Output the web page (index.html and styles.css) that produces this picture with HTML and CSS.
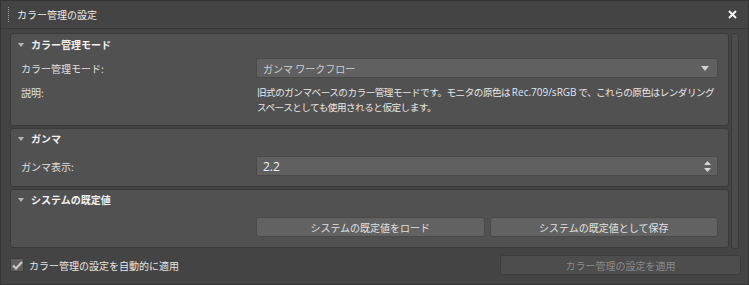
FILE: index.html
```html
<!DOCTYPE html>
<html lang="ja">
<head>
<meta charset="UTF-8">
<title>カラー管理の設定</title>
<link rel="stylesheet" href="styles.css">
</head>
<body>

<div class="window">
    <div class="titlebar">
        <span class="grip"></span>
        <span class="title">カラー管理の設定</span>
        <svg class="close" width="9" height="9" viewBox="0 0 9 9">
            <path d="M1 1 L8 8 M8 1 L1 8" stroke="#f2f2f2" stroke-width="2"/>
        </svg>
    </div>

    <div class="content">
        <div class="panels">
            <div class="panel">
                <div class="panel-head first"><span class="arrow"></span>カラー管理モード</div>
                <div class="panel-body first">
                    <div class="row">
                        <label>カラー管理モード:</label>
                        <div class="field dropdown">ガンマ ワークフロー<span class="down"></span></div>
                    </div>
                    <div class="row desc">
                        <label>説明:</label>
                        <p>旧式のガンマベースのカラー管理モードです。モニタの原色は <span class="latin">Rec.709/sRGB</span> で、これらの原色はレンダリング<br>スペースとしても使用されると仮定します。</p>
                    </div>
                </div>
            </div>

            <div class="panel">
                <div class="panel-head"><span class="arrow"></span>ガンマ</div>
                <div class="panel-body">
                    <div class="row">
                        <label>ガンマ表示:</label>
                        <div class="field spinner">2.2
                            <svg width="7" height="11" viewBox="0 0 7 11">
                                <path d="M3.5 0 L7 4 L0 4 Z M0 7 L7 7 L3.5 11 Z" fill="#d8d8d8"/>
                            </svg>
                        </div>
                    </div>
                </div>
            </div>

            <div class="panel">
                <div class="panel-head"><span class="arrow"></span>システムの既定値</div>
                <div class="panel-body">
                    <div class="row">
                        <span></span>
                        <div class="buttons">
                            <button class="btn">システムの既定値をロード</button>
                            <button class="btn">システムの既定値として保存</button>
                        </div>
                    </div>
                </div>
            </div>
        </div>
        <div class="scrollbar"></div>
    </div>

    <div class="footer">
        <label class="check">
            <span class="box">
                <svg width="11" height="9" viewBox="0 0 11 9">
                    <path d="M1 4.5 L4 7.5 L10 1" stroke="#c8c8c8" stroke-width="2.2" fill="none"/>
                </svg>
            </span>
            カラー管理の設定を自動的に適用
        </label>
        <button class="btn apply" disabled>カラー管理の設定を適用</button>
    </div>
</div>

</body>
</html>
```

FILE: styles.css
```css
body {
    margin: 0;
    background-color: #444444;
    font-family: "Noto Sans CJK JP", "Liberation Sans", sans-serif;
    font-size: 10px;
    color: #e2e2e2;
}
.window {
    width: 749px;
    height: 285px;
    box-sizing: border-box;
    border: 1px solid #333333;
    background-color: #444444;
}
.titlebar {
    height: 27px;
    display: flex;
    align-items: center;
    border-bottom: 1px solid #383838;
}
.grip {
    width: 0;
    height: 15px;
    margin-left: 7px;
    border-left: 1px dotted #9a9a9a;
}
.title {
    margin-left: 8px;
    font-size: 10px;
    color: #ececec;
    flex: 1;
}
.close {
    margin-right: 11px;
}
.content {
    display: flex;
    gap: 2px;
    padding: 4px 7px 0 9px;
}
.panels {
    width: 719px;
    display: flex;
    flex-direction: column;
    gap: 2px;
}
.panel {
    background-color: #515151;
    border: 1px solid #3a3a3a;
    border-radius: 3px;
}
.panel-head {
    height: 19px;
    display: flex;
    align-items: center;
    padding-left: 7px;
    font-weight: bold;
    color: #f2f2f2;
}
.panel-head.first {
    height: 21px;
}
.arrow {
    width: 0;
    height: 0;
    border-left: 3px solid transparent;
    border-right: 3px solid transparent;
    border-top: 4px solid #b8b8b8;
    margin-right: 7px;
}
.panel-body {
    padding: 8px 10px 10px 10px;
}
.panel-body.first {
    padding-top: 3px;
    padding-bottom: 10px;
}
.row {
    display: grid;
    grid-template-columns: 235px 1fr;
    align-items: center;
}
.row label {
    color: #e0e0e0;
}
.row.desc {
    align-items: start;
    margin-top: 7px;
}
.row.desc label {
    line-height: 15px;
}
.row p {
    margin: 0;
    line-height: 15px;
    padding-left: 1px;
    color: #e8e8e8;
    white-space: nowrap;
    font-size: 9.6px;
    letter-spacing: -0.5px;
}
.latin {
    font-family: "Open Sans", "Liberation Sans", sans-serif;
    font-size: 10px;
    color: #dde6f5;
    letter-spacing: 0;
}
.field {
    height: 20px;
    box-sizing: border-box;
    background-color: #606060;
    border: 1px solid #4a4a4a;
    display: flex;
    align-items: center;
    justify-content: space-between;
    padding: 0 6px 0 6px;
}
.dropdown {
    color: #cfcfcf;
}
.down {
    width: 0;
    height: 0;
    border-left: 4px solid transparent;
    border-right: 4px solid transparent;
    border-top: 5px solid #d0d0d0;
    margin-right: 2px;
}
.spinner {
    font-family: "Open Sans", "Liberation Sans", sans-serif;
    font-size: 12px;
    color: #eaf0ff;
}
.buttons {
    display: flex;
    gap: 5px;
}
.btn {
    font-family: inherit;
    font-size: 10px;
    color: #e0e0e0;
    background-color: #626262;
    border: 1px solid #4a4a4a;
    border-radius: 3px;
    height: 20px;
    padding: 0;
    flex: 1;
}
.scrollbar {
    width: 8px;
    height: 216px;
    box-sizing: border-box;
    border: 1px solid #3a3a3a;
    border-radius: 3px;
    background-color: #4c4c4c;
}
.footer {
    display: flex;
    justify-content: space-between;
    align-items: center;
    padding: 6px 7px 0 9px;
}
.check {
    display: flex;
    align-items: center;
    gap: 5px;
    color: #e6e6e6;
}
.box {
    width: 12px;
    height: 12px;
    background-color: #5e5e5e;
    border: 1px solid #3e3e3e;
    display: flex;
    align-items: center;
    justify-content: center;
}
.apply {
    flex: none;
    width: 241px;
    color: #8a8a8a;
    background-color: #4d4d4d;
    border-color: #3c3c3c;
}
```
